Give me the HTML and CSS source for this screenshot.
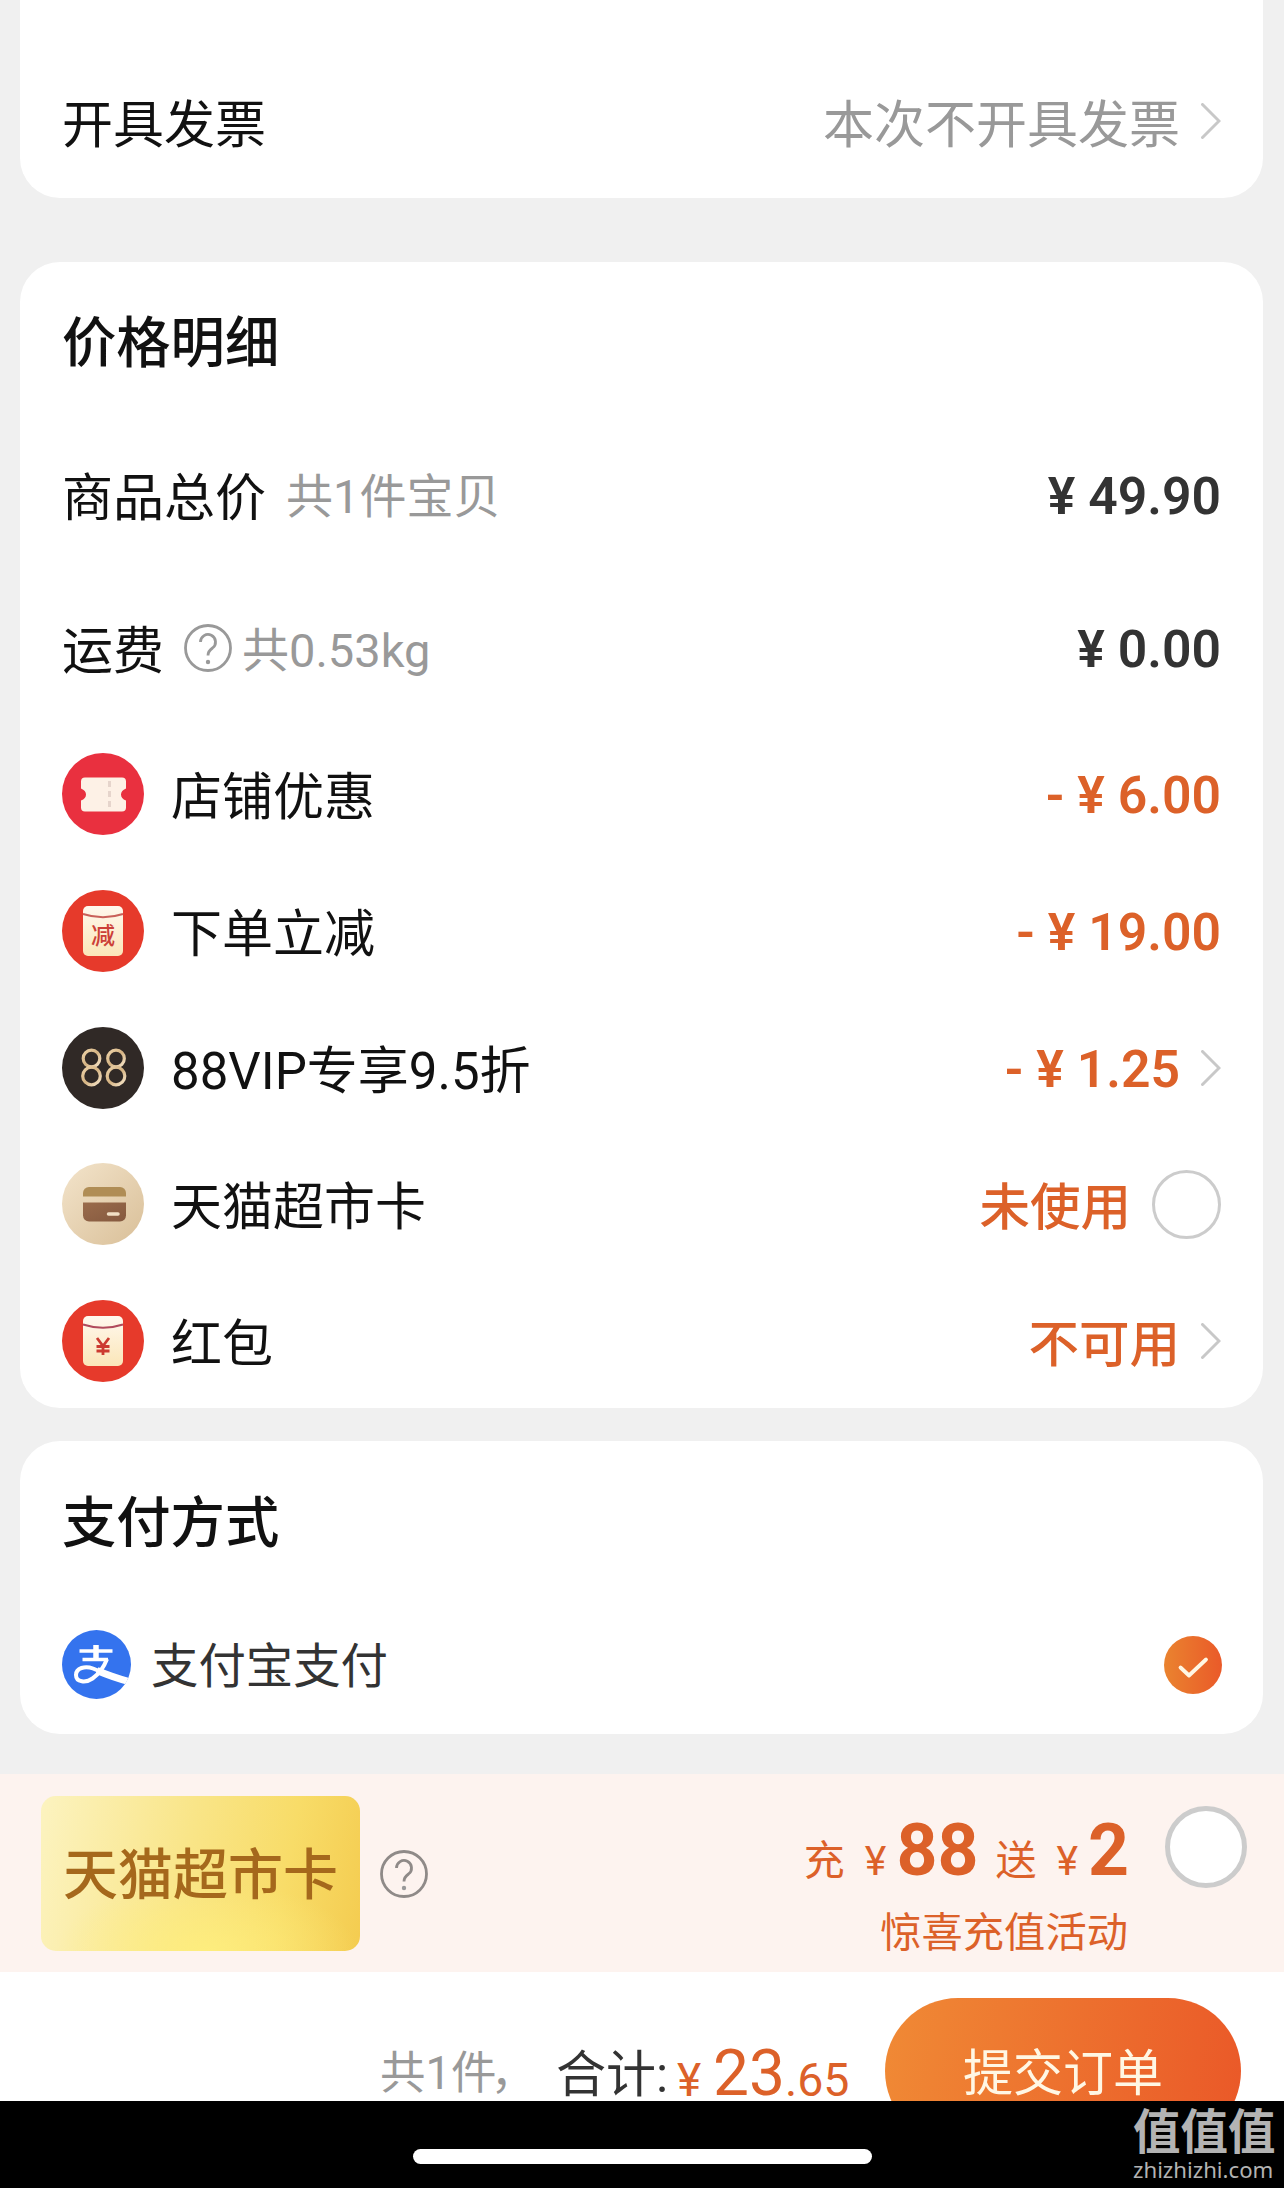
FILE: index.html
```html
<!DOCTYPE html>
<html lang="zh-CN">
<head>
<meta charset="utf-8">
<title>确认订单</title>
<link rel="stylesheet" href="styles.css">
</head>
<body>
<main class="page">
  <section class="card card-invoice">
    <div class="row row-invoice">
      <span class="label">开具发票</span>
      <div class="end">
        <span class="label muted">本次不开具发票</span>
        <svg class="chevron" viewBox="0 0 20 36"><path d="M1.5 1.5 18 18 1.5 34.5"/></svg>
      </div>
    </div>
  </section>

  <section class="card card-price">
    <h2 class="title">价格明细</h2>
    <div class="row row-goods">
      <div class="start"><span class="label">商品总价</span><span class="note note-count">共1件宝贝</span></div>
      <span class="price">¥ 49.90</span>
    </div>
    <div class="row row-freight">
      <div class="start">
        <span class="label">运费</span>
        <svg class="help help-freight" viewBox="0 0 48 48"><circle cx="24" cy="24" r="22.5"/><path d="M16.500 18a7.500 7.500 0 1 1 12 6q-4.500 3.200-4.500 7.500"/><circle class="dot" cx="24" cy="38" r="2.200"/></svg>
        <span class="note">共0.53kg</span>
      </div>
      <span class="price">¥ 0.00</span>
    </div>
    <div class="row row-item">
      <div class="start">
        <svg class="icon" viewBox="0 0 82 82"><circle cx="41" cy="41" r="41" fill="#e9303f"/><path d="M23 24.500h37a4 4 0 0 1 4 4v7q-5 2-5 6t5 6v7a4 4 0 0 1-4 4H23a4 4 0 0 1-4-4v-7q5-2 5-6t-5-6v-7a4 4 0 0 1 4-4z" fill="#fdf1e6"/><path d="M47.500 28v27" stroke="#e6d5cc" stroke-width="3" stroke-dasharray="6 4"/></svg>
        <span class="label">店铺优惠</span>
      </div>
      <span class="price accent">- ¥ 6.00</span>
    </div>
    <div class="row row-item">
      <div class="start">
        <svg class="icon" viewBox="0 0 82 82"><defs><linearGradient id="paper" x1="0" y1="0" x2="0" y2="1"><stop offset="0" stop-color="#fff8ee"/><stop offset="1" stop-color="#fbe6b8"/></linearGradient></defs><circle cx="41" cy="41" r="41" fill="#e63a2b"/><rect x="21" y="16" width="40" height="50" rx="5" fill="url(#paper)"/><path d="M21 24q20 6.500 40 0" fill="none" stroke="#c9605a" stroke-width="2"/><text class="glyph" x="41" y="54" font-size="24">减</text></svg>
        <span class="label">下单立减</span>
      </div>
      <span class="price accent">- ¥ 19.00</span>
    </div>
    <div class="row row-item">
      <div class="start">
        <svg class="icon" viewBox="0 0 82 82"><defs><linearGradient id="gold" x1="0" y1="0" x2="1" y2="1"><stop offset="0" stop-color="#ecd2a8"/><stop offset=".5" stop-color="#d5b382"/><stop offset="1" stop-color="#f7e6cb"/></linearGradient></defs><circle cx="41" cy="41" r="41" fill="#302926"/><g fill="none" stroke="url(#gold)" stroke-width="3.200"><circle cx="29.500" cy="31.500" r="8.300"/><circle cx="29.500" cy="49" r="8.800"/><circle cx="54" cy="31.500" r="8.300"/><circle cx="54" cy="49" r="8.800"/></g></svg>
        <span class="label">88VIP专享9.5折</span>
      </div>
      <div class="end">
        <span class="price accent">- ¥ 1.25</span>
        <svg class="chevron" viewBox="0 0 20 36"><path d="M1.500 1.500 18 18 1.500 34.500"/></svg>
      </div>
    </div>
    <div class="row row-item">
      <div class="start">
        <svg class="icon" viewBox="0 0 82 82"><defs><linearGradient id="cream" x1="0" y1="0" x2="1" y2="1"><stop offset="0" stop-color="#f3e4cb"/><stop offset="1" stop-color="#d9bf98"/></linearGradient><linearGradient id="brown" x1="0" y1="0" x2="1" y2="1"><stop offset="0" stop-color="#9a6b4b"/><stop offset="1" stop-color="#85593f"/></linearGradient></defs><circle cx="41" cy="41" r="41" fill="url(#cream)"/><path d="M21 33.500v-3.500a6 6 0 0 1 6-6h31a6 6 0 0 1 6 6v3.500z" fill="#b08d55"/><path d="M21 39.500h43v13a6 6 0 0 1-6 6H27a6 6 0 0 1-6-6z" fill="url(#brown)"/><path d="M46.500 51h9.500" stroke="#f1dfc5" stroke-width="3.500" stroke-linecap="round"/></svg>
        <span class="label">天猫超市卡</span>
      </div>
      <div class="end">
        <span class="status">未使用</span>
        <span class="radio"></span>
      </div>
    </div>
    <div class="row row-item">
      <div class="start">
        <svg class="icon" viewBox="0 0 82 82"><circle cx="41" cy="41" r="41" fill="#e63a2b"/><rect x="21" y="16" width="40" height="50" rx="5" fill="url(#paper)"/><path d="M21 24.500q20 6.500 40 0" fill="none" stroke="#b04a5c" stroke-width="2"/><path d="M35 38l6 8 6-8M41 46v9M34.500 46.500h13M34.500 51h13" fill="none" stroke="#cc3b30" stroke-width="2.800"/></svg>
        <span class="label">红包</span>
      </div>
      <div class="end">
        <span class="status">不可用</span>
        <svg class="chevron" viewBox="0 0 20 36"><path d="M1.500 1.500 18 18 1.500 34.500"/></svg>
      </div>
    </div>
  </section>

  <section class="card card-pay">
    <h2 class="title">支付方式</h2>
    <div class="row row-pay">
      <div class="start">
        <svg class="pay-icon" viewBox="0 0 69 69"><defs><clipPath id="disc"><circle cx="34.500" cy="34.500" r="34.500"/></clipPath></defs><circle cx="34.500" cy="34.500" r="34.500" fill="#3473ee"/><g clip-path="url(#disc)" fill="none" stroke="#fff"><path d="M34 15v14" stroke-width="5.500"/><path d="M17.500 21h33" stroke-width="3.400"/><path d="M20.500 29.500h25.500" stroke-width="3.400"/><path d="M45 29Q40 42 30.500 48.500C24 53 14 52.500 14 45c0-7 9-9.500 17-6.500Q45 44.500 69 53" stroke-width="4"/><path d="M35 40.500Q50 47 70 52.500" stroke-width="7"/></g></svg>
        <span class="pay-name">支付宝支付</span>
      </div>
      <svg class="check" viewBox="0 0 58 58"><defs><linearGradient id="orange" x1="0" y1="0" x2="1" y2="0"><stop offset="0" stop-color="#ea832f"/><stop offset="1" stop-color="#ea5a29"/></linearGradient></defs><circle cx="29" cy="29" r="29" fill="url(#orange)"/><path d="M16.500 31.500 25 39.500 42 23.500" fill="none" stroke="#fff7e4" stroke-width="3.800" stroke-linecap="round" stroke-linejoin="round"/></svg>
    </div>
  </section>

  <section class="promo">
    <div class="gift"><span class="gift-name">天猫超市卡</span></div>
    <svg class="help help-promo" viewBox="0 0 48 48"><circle cx="24" cy="24" r="22.500"/><path d="M16.500 18a7.500 7.500 0 1 1 12 6q-4.500 3.200-4.500 7.500"/><circle class="dot" cx="24" cy="38" r="2.200"/></svg>
    <div class="offer">
      <div class="offer-main"><span>充</span><span class="yen">¥</span><b>88</b><span class="send">送</span><span class="yen">¥</span><b>2</b></div>
      <div class="offer-sub">惊喜充值活动</div>
    </div>
    <span class="radio radio-large"></span>
  </section>

  <footer class="checkout">
    <div class="total"><span class="count">共1件<span class="comma">，</span></span><span class="sum">合计:</span><span class="sum-yen">¥</span><span class="sum-int">23</span><span class="sum-dec">.65</span></div>
    <div class="submit">提交订单</div>
  </footer>

  <div class="system">
    <div class="home-bar"></div>
    <div class="mark"><span class="mark-name">值值值</span><span class="mark-site">zhizhizhi.com</span></div>
  </div>
</main>
</body>
</html>
```
FILE: styles.css
```css
* { box-sizing: border-box; margin: 0; padding: 0; }

body {
  width: 1284px;
  height: 2188px;
  overflow: hidden;
  background: #f0f0f0;
  color: #111;
  font-family: Roboto, "Noto Sans CJK SC", sans-serif;
}

svg { display: block; flex: none; }
span { white-space: nowrap; }

.page {
  display: flex;
  flex-direction: column;
  width: 1284px;
  height: 2188px;
}

.card {
  margin: 0 21px 0 20px;
  padding: 0 42px;
  background: #fff;
  border-radius: 40px;
  flex: none;
}
.card-invoice { height: 198px; border-radius: 0 0 40px 40px; padding-top: 45px; }
.card-price { height: 1146px; margin-top: 64px; }
.card-pay { height: 293px; margin-top: 33px; }

.title {
  height: 160px;
  line-height: 163px;
  font-size: 54.300px;
  font-weight: 500;
}
.card-pay .title { height: 158px; line-height: 165px; }

.row, .start, .end { display: flex; align-items: center; }
.row { justify-content: space-between; }
.row-invoice { height: 150px; }
.row-goods { height: 145px; }
.row-freight { height: 159px; padding-top: 3px; }
.row-item { height: 136.700px; }
.row-pay { height: 131px; }

.label { padding-top: 8px; font-size: 51px; line-height: 60px; }
.row-invoice .label { padding-top: 11px; }
.row-invoice .chevron { margin-top: 2px; }
.muted { color: #999; }
.note { padding-top: 5px; font-size: 47px; line-height: 60px; color: #999; }
.note-count { margin-left: 20px; }

.price {
  padding-top: 4px;
  font-size: 51.700px;
  line-height: 60px;
  font-weight: 600;
  color: #333;
}
.accent, .status { color: #dc6129; }
.status { padding-top: 8px; font-size: 50.500px; line-height: 60px; font-weight: 500; }

.chevron { width: 20px; height: 36px; margin-left: 21px; }
.chevron path { fill: none; stroke: #c8c8c8; stroke-width: 3; stroke-linecap: round; }

.help { fill: none; stroke: #999; stroke-width: 2.800; width: 48px; height: 48px; }
.help .dot { fill: #999; stroke: none; }
.help-freight { margin: 0 10px 0 20px; }

.icon { width: 82px; height: 82px; margin-right: 27px; }
.glyph { fill: #cc4038; text-anchor: middle; font-weight: 500; }

.radio {
  width: 69px;
  height: 69px;
  margin-left: 21px;
  border: 3.500px solid #ccc;
  border-radius: 50%;
  background: #fff;
}
.radio-large { width: 82px; height: 82px; margin: 32px 37px 0 37px; border-width: 5px; }

.pay-icon { width: 69px; height: 69px; margin-right: 20px; }
.pay-name { padding-top: 5px; font-size: 47.400px; line-height: 60px; color: #333; }
.check { width: 58px; height: 58px; margin-right: -1px; }

.promo {
  display: flex;
  align-items: flex-start;
  flex: none;
  height: 198px;
  margin-top: 40px;
  background: #fdf3ef;
}
.gift {
  display: flex;
  align-items: center;
  width: 319px;
  height: 155px;
  margin: 22px 0 0 41px;
  padding: 3px 0 0 22px;
  border-radius: 15px;
  background:
    radial-gradient(ellipse 150px 70px at 52% 100%, #fff07ecc, #fff07e00),
    linear-gradient(100deg, #fcf3c0 0%, #f9e588 45%, #f8dc68 75%, #f4cc50 100%);
}
.gift-name { font-size: 55px; line-height: 64px; font-weight: 500; color: #a5681c; }
.help-promo { margin: 76px 0 0 20px; stroke: #8f8a88; }

.offer { margin-left: auto; text-align: right; color: #dc6129; }
.offer-main {
  display: flex;
  align-items: baseline;
  justify-content: flex-end;
  height: 124px;
  margin-right: -1px;
  padding-top: 37px;
  font-size: 41px;
  line-height: 80px;
}
.offer-main b { margin-left: 10px; font-size: 71.500px; }
.send { margin-left: 17px; }
.yen { margin-left: 20px; }
.offer-sub { font-size: 41.300px; line-height: 70px; }

.checkout {
  display: flex;
  flex: none;
  height: 129px;
  overflow: hidden;
  background: #fff;
}
.total {
  display: flex;
  align-items: flex-start;
  width: 885px;
  padding: 65px 0 0 380px;
  line-height: 70px;
}
.count { width: 176px; margin-top: 2px; font-size: 45.500px; color: #999; }
.comma { margin-left: -6px; }
.sum { width: 121px; margin-top: 3px; font-size: 50px; color: #333; }
.sum-yen, .sum-int, .sum-dec { color: #dc6129; }
.sum-yen { width: 36px; margin-top: 8px; font-size: 46px; }
.sum-int { margin-top: 2px; font-size: 64px; }
.sum-dec { margin-top: 8px; font-size: 46.500px; }
.submit {
  flex: none;
  width: 356px;
  height: 146px;
  margin-top: 26px;
  border-radius: 73px;
  background: linear-gradient(100deg, #f08a35, #ea5828);
  color: #fff7e4;
  font-size: 50px;
  line-height: 152px;
  text-align: center;
}

.system {
  display: grid;
  grid-template-columns: 413px 459px 1fr;
  flex: none;
  height: 87px;
  background: #000;
}
.home-bar {
  grid-column: 2;
  height: 15px;
  margin-top: 48px;
  border-radius: 8px;
  background: #fff;
}
.mark {
  display: flex;
  flex-direction: column;
  grid-column: 3;
  margin-left: 261px;
  color: #b3b3b3;
}
.mark-name { margin-top: 8px; font-size: 47.500px; line-height: 48px; font-weight: 700; }
.mark-site { font-family: "Noto Sans", sans-serif; font-size: 22.200px; line-height: 26px; }
```
